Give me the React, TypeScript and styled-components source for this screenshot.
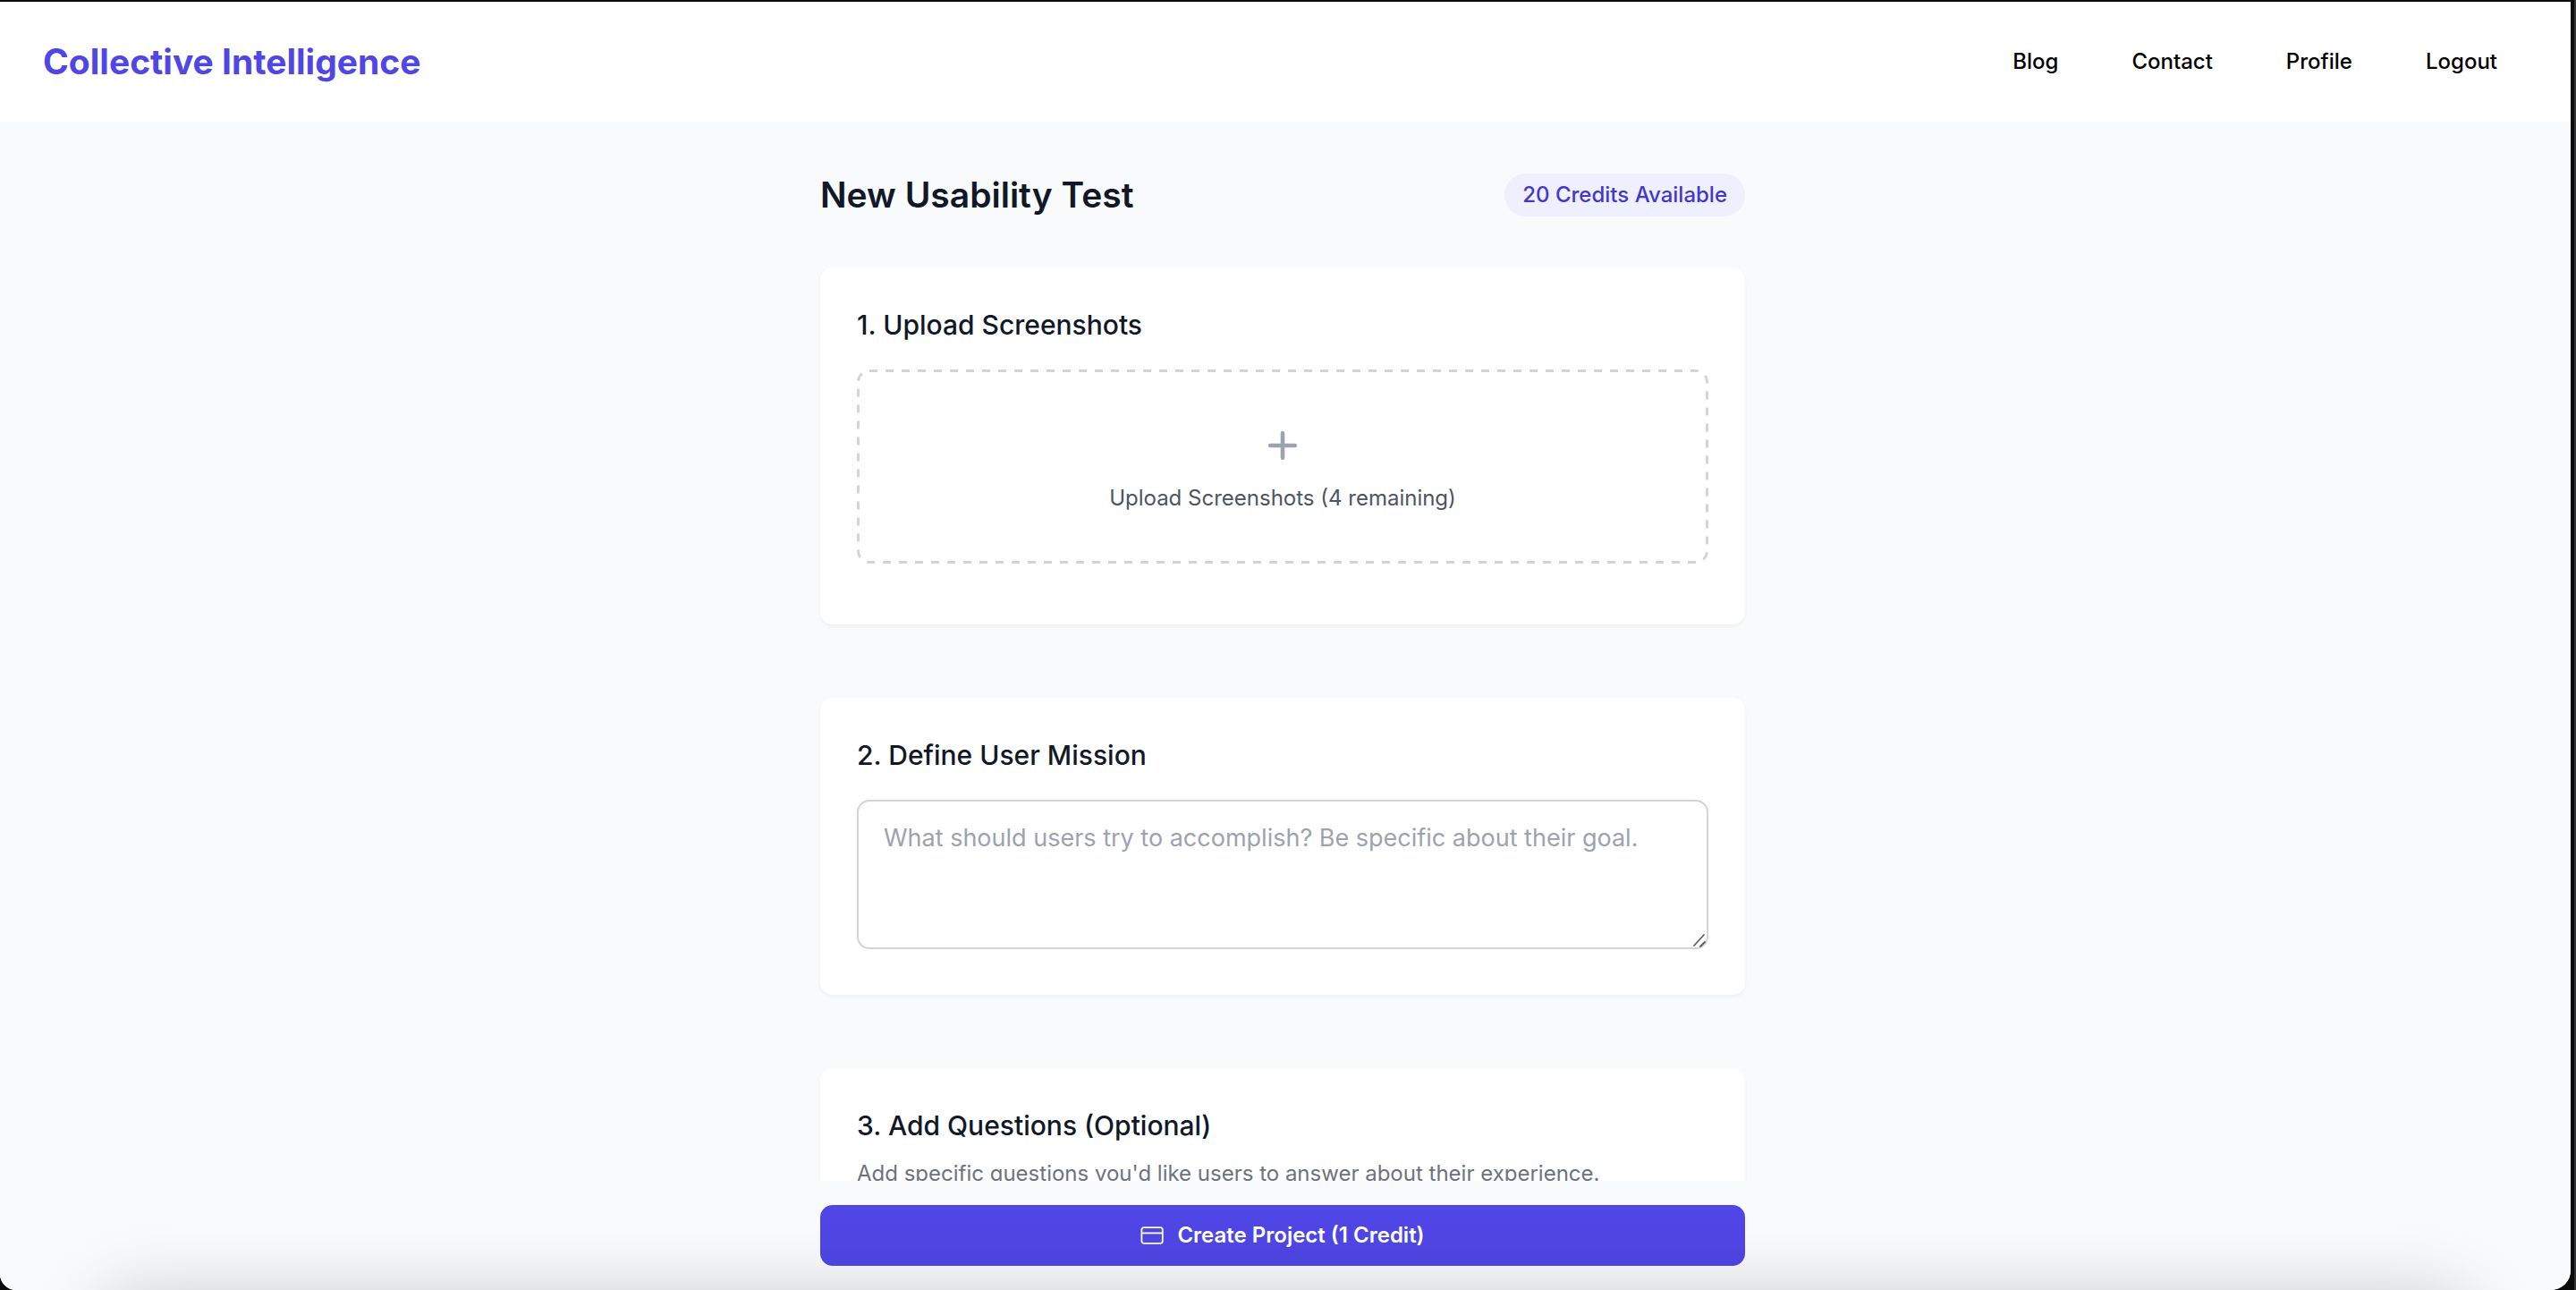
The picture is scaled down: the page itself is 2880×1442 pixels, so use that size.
import React from 'react';
import styled, { createGlobalStyle } from 'styled-components';

const GlobalStyle = createGlobalStyle`
  *, *::before, *::after { box-sizing: border-box; }
  body {
    margin: 0;
    background: #000;
    color: #111827;
    font-family: Inter, "Liberation Sans", sans-serif;
    font-size: 24px;
  }
  h1, h2, p { margin: 0; }
  button, textarea { font-family: inherit; }
`;

const Desktop = styled.div`
  height: 100vh;
  padding: 2px 6px 0 0;
  background: linear-gradient(to left, #333 2px, #0b0b0b 2px);
`;

const Window = styled.div`
  position: relative;
  height: 100%;
  display: grid;
  grid-template-rows: auto minmax(0, 1fr) auto;
  overflow: hidden;
  border-radius: 0 0 22px 18px;
  background: #f9fafc;
`;

const DockShade = styled.div`
  position: absolute;
  top: 100%;
  left: 110px;
  right: 110px;
  height: 160px;
  border-radius: 40px;
  box-shadow: 0 0 76px rgba(0, 0, 0, 0.17);
  pointer-events: none;
`;

const Header = styled.header`
  display: flex;
  align-items: center;
  justify-content: space-between;
  min-height: 134px;
  padding: 0 82px 0 48px;
  background: #fff;
`;

const Brand = styled.a`
  color: #4f46e5;
  font-size: 39px;
  font-weight: 700;
  line-height: 48px;
  text-decoration: none;
`;

const Nav = styled.nav`
  display: flex;
  gap: 82px;
`;

const NavLink = styled.a`
  color: #000;
  font-size: 24px;
  font-weight: 500;
  line-height: 34px;
  text-decoration: none;
`;

const NavButton = styled(NavLink).attrs({ as: 'button', type: 'button' })`
  padding: 0;
  border: 0;
  background: none;
  cursor: pointer;
`;

const Main = styled.main`
  overflow-y: auto;
  scrollbar-width: none;
  padding: 58px 6px 0 0;
`;

const Column = styled.div`
  width: 100%;
  max-width: 1034px;
  margin: 0 auto;
`;

const TitleRow = styled.div`
  display: flex;
  align-items: center;
  justify-content: space-between;
  margin-bottom: 57px;
`;

const PageTitle = styled.h1`
  font-size: 39px;
  font-weight: 600;
  line-height: 48px;
`;

const CreditBadge = styled.span`
  padding: 7px 20px;
  border-radius: 24px;
  background: #eff0ff;
  color: #4338ca;
  font-size: 24px;
  font-weight: 500;
  line-height: 34px;
`;

const Sections = styled.form`
  display: flex;
  flex-direction: column;
  gap: 82px;
`;

const Card = styled.section`
  padding: 41px;
  border-radius: 14px;
  background: #fff;
  box-shadow: 0 2px 4px rgba(0, 0, 0, 0.05);
`;

const CardTitle = styled.h2<{ $gap: number }>`
  margin-bottom: ${(p) => p.$gap}px;
  font-size: 30px;
  font-weight: 500;
  line-height: 46px;
`;

const UploadArea = styled.button`
  position: relative;
  display: flex;
  flex-direction: column;
  align-items: center;
  justify-content: center;
  gap: 20px;
  width: 100%;
  min-height: 217px;
  margin-bottom: 27px;
  padding: 6px 0 0;
  border: 0;
  border-radius: 14px;
  background: none;
  color: #4b5563;
  font-size: 24px;
  line-height: 34px;
  cursor: pointer;
`;

const DashedOutline = styled.svg`
  position: absolute;
  inset: 0;
  width: 100%;
  height: 100%;
  fill: none;
  stroke: #d1d5db;
  stroke-width: 3;
  stroke-dasharray: 9 9;
  pointer-events: none;

  rect {
    width: calc(100% - 3px);
    height: calc(100% - 3px);
  }
`;

const MissionInput = styled.textarea`
  display: block;
  width: 100%;
  height: 167px;
  margin-bottom: 10px;
  padding: 24px 28px;
  border: 2px solid #d1d5db;
  border-radius: 14px;
  background: #fff;
  color: #111827;
  font-size: 27px;
  line-height: 34px;
  resize: vertical;

  &::placeholder { color: #9ca3af; opacity: 1; }
  &::-webkit-resizer {
    background: url("data:image/svg+xml,%3Csvg xmlns='http://www.w3.org/2000/svg' viewBox='0 0 15 15' fill='none' stroke='%23606060' stroke-width='1.8' stroke-linecap='round'%3E%3Cpath d='M1 13 12 1M8 14 13 9'/%3E%3C/svg%3E") center / 15px 15px no-repeat;
  }
`;

const Hint = styled.p`
  color: #6b7280;
  font-size: 24px;
  line-height: 34px;
`;

const ActionBar = styled.footer`
  padding: 27px 6px 27px 0;
  background: #f9fafc;
`;

const CreateButton = styled.button`
  display: flex;
  align-items: center;
  justify-content: center;
  gap: 14px;
  width: 100%;
  min-height: 68px;
  border: 0;
  border-radius: 14px;
  background: #4f46e5;
  color: #fff;
  font-size: 24px;
  font-weight: 600;
  line-height: 34px;
  cursor: pointer;
`;

const PlusIcon = () => (
  <svg width="44" height="44" viewBox="0 0 24 24" fill="none" stroke="#9ca3af" strokeWidth="2.5" strokeLinecap="round" aria-hidden="true">
    <path d="M12 4.5v15M4.5 12h15" />
  </svg>
);

const CardIcon = () => (
  <svg width="27" height="27" viewBox="0 0 27 27" fill="none" stroke="#fff" strokeWidth="1.8" aria-hidden="true">
    <rect x="1.4" y="4.2" width="23.4" height="17.6" rx="2.6" />
    <path d="M1.4 10.4h23.4" />
  </svg>
);

export default function App() {
  return (
    <Desktop>
      <GlobalStyle />
      <Window>
        <Header>
          <Brand href="#">Collective Intelligence</Brand>
          <Nav aria-label="Main">
            <NavLink href="#blog">Blog</NavLink>
            <NavLink href="#contact">Contact</NavLink>
            <NavLink href="#profile">Profile</NavLink>
            <NavButton>Logout</NavButton>
          </Nav>
        </Header>
        <Main>
          <Column>
            <TitleRow>
              <PageTitle>New Usability Test</PageTitle>
              <CreditBadge>20 Credits Available</CreditBadge>
            </TitleRow>
            <Sections id="project-form">
              <Card>
                <CardTitle $gap={27}>1. Upload Screenshots</CardTitle>
                <UploadArea type="button">
                  <DashedOutline aria-hidden="true">
                    <rect x="1.5" y="1.5" rx="12.5" />
                  </DashedOutline>
                  <PlusIcon />
                  Upload Screenshots (4 remaining)
                </UploadArea>
              </Card>
              <Card>
                <CardTitle $gap={27}>
                  <label htmlFor="mission">2. Define User Mission</label>
                </CardTitle>
                <MissionInput
                  id="mission"
                  placeholder="What should users try to accomplish? Be specific about their goal."
                />
              </Card>
              <Card>
                <CardTitle $gap={14}>3. Add Questions (Optional)</CardTitle>
                <Hint>Add specific questions you'd like users to answer about their experience.</Hint>
              </Card>
            </Sections>
          </Column>
        </Main>
        <ActionBar>
          <Column>
            <CreateButton type="submit" form="project-form">
              <CardIcon />
              Create Project (1 Credit)
            </CreateButton>
          </Column>
        </ActionBar>
        <DockShade />
      </Window>
    </Desktop>
  );
}
